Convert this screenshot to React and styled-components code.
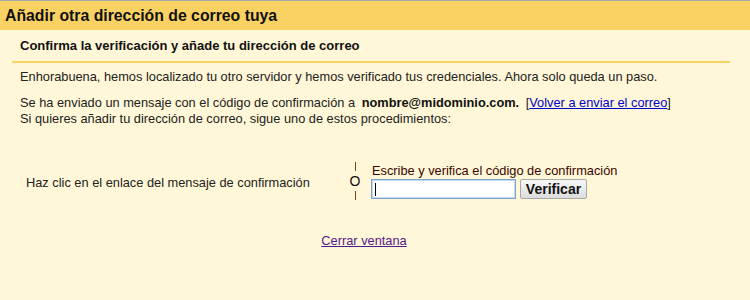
import React from 'react';
import styled, { createGlobalStyle } from 'styled-components';

const Global = createGlobalStyle`
  html, body {
    margin: 0;
    padding: 0;
    background: #fff7d7;
  }
  body {
    font-family: 'Liberation Sans', Arial, sans-serif;
    font-size: 12.8px;
    color: #222;
  }
`

const Page = styled.div`
  width: 750px;
  height: 300px;
  background: #fff7d7;
  overflow: hidden;
`

const Header = styled.div`
  height: 29px;
  line-height: 30px;
  border-top: 1px solid #a9a9a9;
  background: #fad163;
  padding-left: 5px;
  font-size: 15.8px;
  font-weight: bold;
  color: #111;
`

const Subtitle = styled.div`
  margin: 8px 0 0 20px;
  line-height: 16px;
  font-size: 13px;
  font-weight: bold;
  color: #111;
`

const Divider = styled.div`
  margin: 7px 20px 0 12px;
  height: 2px;
  background: #fad163;
`

const Para = styled.div`
  margin: ${p => p.$top}px 0 0 20px;
  line-height: 16px;
`

const Email = styled.b`
  color: #111;
  margin: 0 3px;
`

const Link = styled.a`
  color: #0000cc;
  text-decoration: underline;
`

const Row = styled.div`
  display: flex;
  align-items: center;
  margin-top: 33px;
  height: 41px;
`

const Left = styled.div`
  width: 322px;
  padding-left: 26px;
  line-height: 16px;
  margin-top: 5px;
`

const Or = styled.div`
  width: 14px;
  display: flex;
  flex-direction: column;
  align-items: center;
  color: #111;
`

const Bar = styled.div`
  width: 1px;
  height: 9px;
  background: #6b4a10;
  margin: ${p => p.$m};
`

const Letter = styled.div`
  line-height: 14px;
  font-size: 14px;
`

const Right = styled.div`
  margin-left: 9px;
  display: flex;
  flex-direction: column;
`

const Label = styled.div`
  color: #3a0500;
  line-height: 16px;
  margin-left: 1px;
`

const Controls = styled.div`
  display: flex;
  align-items: center;
  gap: 4px;
`

const Input = styled.div`
  width: 143px;
  height: 18px;
  border: 1px solid #7da2ce;
  box-shadow: inset 0 0 0 1px #c5d9f1;
  background: #fff;
  position: relative;

  &::after {
    content: '';
    position: absolute;
    left: 3px;
    top: 3px;
    width: 1px;
    height: 13px;
    background: #000;
  }
`

const Button = styled.button`
  width: 67px;
  height: 20px;
  padding: 0;
  border: 1px solid #a8a8a8;
  border-radius: 2px;
  background: linear-gradient(#f8f8f8, #dcdcdc);
  font-family: 'Liberation Sans', Arial, sans-serif;
  font-size: 14px;
  font-weight: bold;
  color: #111;
`

const Footer = styled.div`
  margin-top: 32px;
  padding-right: 22px;
  text-align: center;
  line-height: 16px;

  a {
    color: #551a8b;
    text-decoration: underline;
  }
`

const App = () => {
  return (
    <Page>
      <Global />
      <Header>Añadir otra dirección de correo tuya</Header>
      <Subtitle>Confirma la verificación y añade tu dirección de correo</Subtitle>
      <Divider />
      <Para $top={6}>
        Enhorabuena, hemos localizado tu otro servidor y hemos verificado tus credenciales. Ahora solo queda un paso.
      </Para>
      <Para $top={10}>
        Se ha enviado un mensaje con el código de confirmación a
        <Email> nombre@midominio.com. </Email>
        {' '}[<Link href="#">Volver a enviar el correo</Link>]
        <br />
        Si quieres añadir tu dirección de correo, sigue uno de estos procedimientos:
      </Para>
      <Row>
        <Left>Haz clic en el enlace del mensaje de confirmación</Left>
        <Or>
          <Bar $m="0 0 3px" />
          <Letter>O</Letter>
          <Bar $m="3px 0 0" />
        </Or>
        <Right>
          <Label>Escribe y verifica el código de confirmación</Label>
          <Controls>
            <Input />
            <Button>Verificar</Button>
          </Controls>
        </Right>
      </Row>
      <Footer>
        <a href="#">Cerrar ventana</a>
      </Footer>
    </Page>
  );
};

export default App;
